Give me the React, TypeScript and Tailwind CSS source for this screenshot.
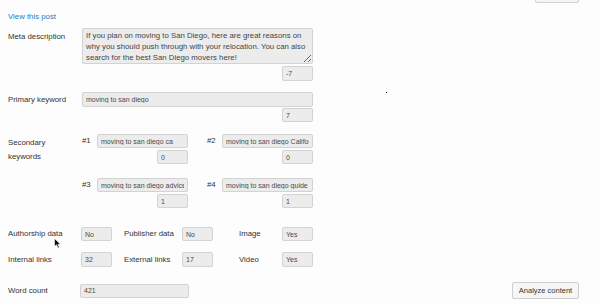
import React from 'react';

// Basic field look used by every box in the panel
const field =
  'bg-[#ececec] border border-[#d3d3d3] rounded-[2px] text-[#4a4a4a] outline-none px-[3px] leading-none text-[7px]';

function Box({ value, className = '' }: { value: string; className?: string }) {
  return <input readOnly value={value} className={`${field} ${className}`} />;
}

function Counter({ value, className = '' }: { value: string; className?: string }) {
  return <Box value={value} className={`w-[31px] h-[14px] ${className}`} />;
}

function KeywordPair({ tag, keyword, count }: { tag: string; keyword: string; count: string }) {
  return (
    <div className="flex">
      <span className="w-[15px] h-[14px] flex items-center">{tag}</span>
      <div className="flex flex-col items-end">
        <Box value={keyword} className="w-[91px] h-[14px]" />
        <Counter value={count} className="mt-[2px]" />
      </div>
    </div>
  );
}

function Stat({ label, value, width }: { label: string; value: string; width: string }) {
  return (
    <div className="flex items-center">
      <span className={width}>{label}</span>
      <Box value={value} className="w-[31px] h-full" />
    </div>
  );
}

export default function App() {
  return (
    <div
      className="relative w-[600px] h-[304px] overflow-hidden bg-[#fdfdfd] text-[#333] text-[7.8px]"
      style={{ fontFamily: '"Liberation Sans", Arial, sans-serif' }}
    >
      {/* cut-off button from the panel above */}
      <div className="flex justify-end pr-[21px]">
        <div className="-mt-[14px] w-[44px] h-[17px] bg-[#f4f4f4] border border-[#d0d0d0] rounded-[2px]" />
      </div>

      <div className="pl-[8px] flex flex-col">
        <a className="mt-[9px] h-[10px] leading-[10px] text-[#2c7bb6]">View this post</a>

        {/* Meta description */}
        <div className="mt-[6px] flex">
          <span className="w-[74px] pt-[4px] leading-[10px]">Meta description</span>
          <div className="flex flex-col items-end">
            <textarea
              readOnly
              defaultValue="If you plan on moving to San Diego, here are great reasons on why you should push through with your relocation. You can also search for the best San Diego movers here!"
              className="w-[231px] h-[36px] bg-[#ececec] border border-[#d3d3d3] rounded-[2px] text-[#444] outline-none px-[3px] pt-[1px] text-[7.8px] leading-[11px] overflow-hidden resize"
            />
            <Counter value="-7" className="mt-[2px] h-[15px]" />
          </div>
        </div>

        {/* Primary keyword */}
        <div className="mt-[11px] flex">
          <span className="w-[74px] h-[15px] flex items-center">Primary keyword</span>
          <div className="flex flex-col items-end">
            <Box value="moving to san diego" className="w-[231px] h-[15px]" />
            <Counter value="7" className="mt-[1px]" />
          </div>
        </div>

        {/* Secondary keywords */}
        <div className="mt-[12px] flex">
          <span className="w-[74px] pt-[2px] leading-[14px]">
            Secondary
            <br />
            keywords
          </span>
          <div className="grid grid-cols-[125px_106px] gap-y-[14px]">
            <KeywordPair tag="#1" keyword="moving to san diego ca" count="0" />
            <KeywordPair tag="#2" keyword="moving to san diego Califon" count="0" />
            <KeywordPair tag="#3" keyword="moving to san diego advice" count="1" />
            <KeywordPair tag="#4" keyword="moving to san diego guide" count="1" />
          </div>
        </div>

        {/* Structured data + links */}
        <div className="mt-[19px] h-[14px] flex">
          <Stat label="Authorship data" value="No" width="w-[73px]" />
          <div className="w-[12px]" />
          <Stat label="Publisher data" value="No" width="w-[58px]" />
          <div className="w-[26px]" />
          <Stat label="Image" value="Yes" width="w-[43px]" />
        </div>
        <div className="mt-[11px] h-[15px] flex">
          <Stat label="Internal links" value="32" width="w-[73px]" />
          <div className="w-[12px]" />
          <Stat label="External links" value="17" width="w-[58px]" />
          <div className="w-[26px]" />
          <Stat label="Video" value="Yes" width="w-[43px]" />
        </div>

        {/* Word count */}
        <div className="mt-[15px] flex items-center pr-[21px]">
          <span className="w-[72px]">Word count</span>
          <Box value="421" className="w-[109px] h-[14px]" />
          <div className="flex-1" />
          <button className="w-[67px] h-[17px] bg-[#f6f6f6] border border-[#cfcfcf] rounded-[2px] text-[#333] text-[7.5px] leading-none">
            Analyze content
          </button>
        </div>
      </div>

      {/* stray dot and mouse pointer captured in the screenshot */}
      <div className="absolute left-[386px] top-[92px] w-[1px] h-[1px] bg-black" />
      <svg className="absolute left-[54px] top-[238px]" width="8" height="11" viewBox="0 0 8 11">
        <path d="M0.5 0.5 L0.5 8.5 L2.5 6.8 L4 10 L5.3 9.4 L3.9 6.3 L6.5 6.3 Z" fill="#111" stroke="#fff" strokeWidth="0.6" />
      </svg>
    </div>
  );
}
